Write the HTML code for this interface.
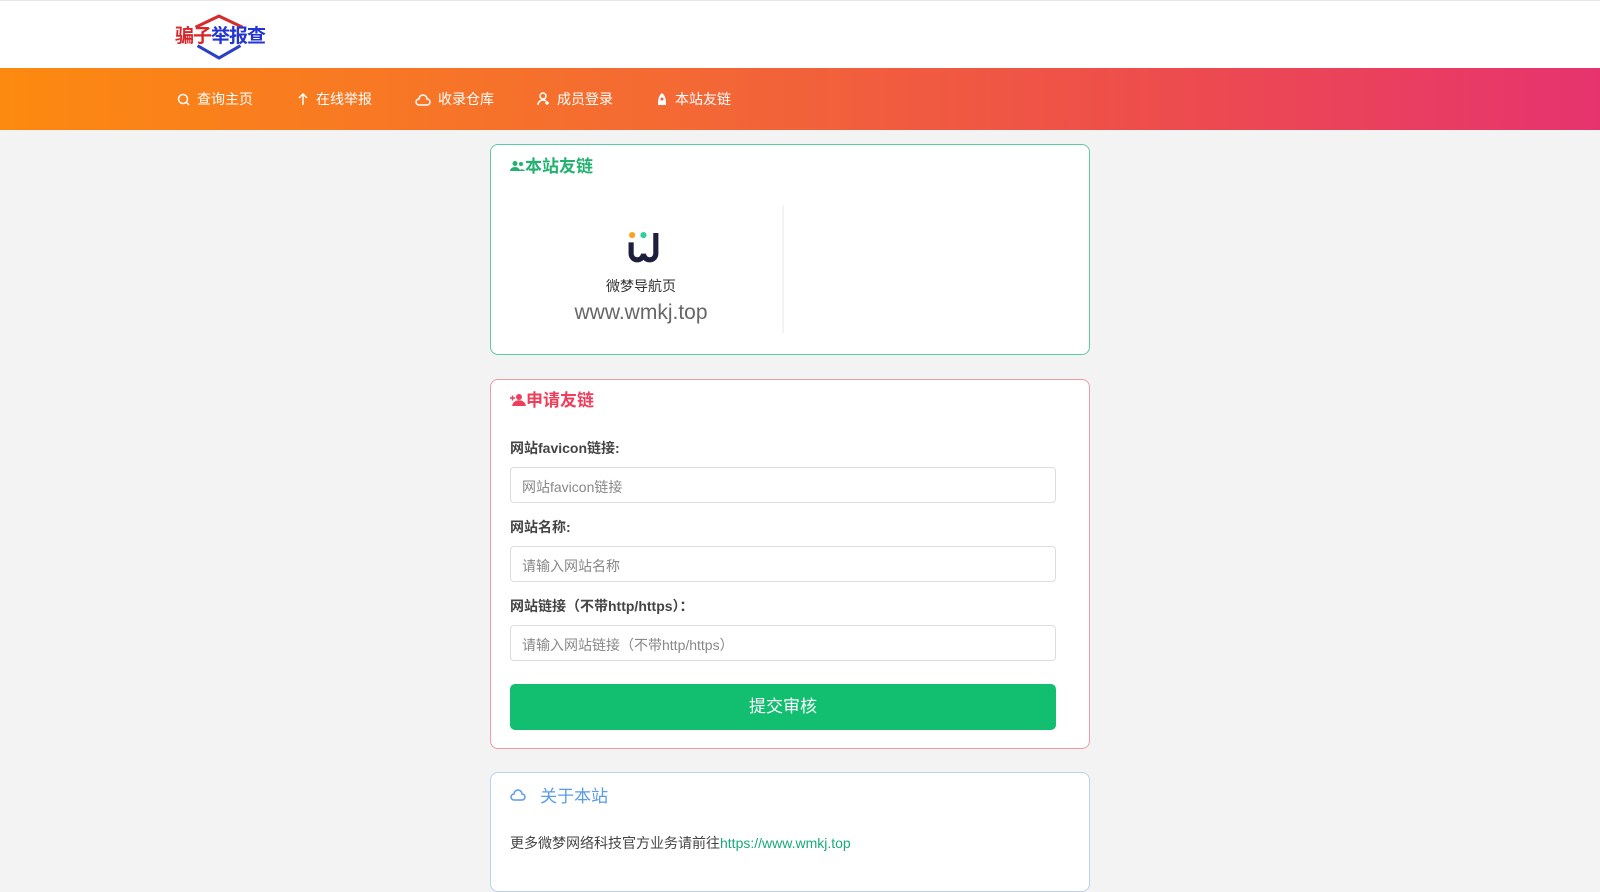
<!DOCTYPE html>
<html><head><meta charset="utf-8"><style>
*{box-sizing:border-box;margin:0;padding:0}
body{width:1600px;height:862px;overflow:hidden;background:#f3f3f3;font-family:"Liberation Sans","Noto Sans CJK SC",sans-serif;position:relative}
.hd{position:absolute;left:0;top:0;width:1600px;height:68px;background:#fff;border-top:1px solid #e8e8e8}
.nav{position:absolute;left:0;top:68px;width:1600px;height:62px;background:linear-gradient(90deg,#fd8a10 0%,#f46b32 40%,#ee4f4a 70%,#e6336f 100%)}
.nav span{position:absolute;top:21px;color:#fff;font-size:14px;line-height:20px}
.nav svg{vertical-align:-2px;margin-right:7px}
.card{position:absolute;left:490px;width:600px;background:#fff;border-radius:8px}
.t{position:absolute;left:19px;font-size:17px;font-weight:bold}
label{position:absolute;left:19px;font-size:14px;font-weight:bold;color:#444}
.in{position:absolute;left:19px;width:546px;height:36px;border:1px solid #ddd;border-radius:4px;font-size:14px;color:#888;padding:9px 11px}
</style></head><body>
<div class="hd">
<svg style="position:absolute;left:187px;top:12px" width="64" height="47" viewBox="0 0 62 46"><path d="M8 14 L31 3 L54 14" fill="none" stroke="#d52b2b" stroke-width="3"/><path d="M10 32 L31 44 L52 32" fill="none" stroke="#2a3fc8" stroke-width="3"/></svg>
<div style="position:absolute;left:175px;top:20px;font-size:19px;font-weight:bold;letter-spacing:-1px"><span style="color:#d8262a">骗子</span><span style="color:#2335d0">举报查</span></div>
</div>
<div class="nav">
<span style="left:177px"><svg width="13" height="13" viewBox="0 0 13 13"><circle cx="6" cy="6" r="4.5" fill="none" stroke="#fff" stroke-width="1.5"/><path d="M9.5 9.5 L12 12" stroke="#fff" stroke-width="1.5"/></svg>查询主页</span>
<span style="left:297px"><svg width="12" height="14" viewBox="0 0 12 14"><path d="M6 13 V2 M2 6 L6 2 L10 6" fill="none" stroke="#fff" stroke-width="1.5"/></svg>在线举报</span>
<span style="left:415px"><svg width="16" height="12" viewBox="0 0 16 12"><path d="M4 11 a3 3 0 0 1 0-6 a4 4 0 0 1 8 0 a3 3 0 0 1 0 6 Z" fill="none" stroke="#fff" stroke-width="1.5"/></svg>收录仓库</span>
<span style="left:537px"><svg width="13" height="14" viewBox="0 0 13 14"><circle cx="6" cy="4" r="3" fill="none" stroke="#fff" stroke-width="1.5"/><path d="M1 13 a5 5 0 0 1 8-4 M10 9 v4 M8 11 h4" fill="none" stroke="#fff" stroke-width="1.5"/></svg>成员登录</span>
<span style="left:656px"><svg width="12" height="14" viewBox="0 0 12 14"><path d="M6 1 C2 4 2 9 2 13 H10 C10 9 10 4 6 1Z" fill="#fff"/><circle cx="6" cy="7" r="1.5" fill="#f0574a"/></svg>本站友链</span>
</div>
<div class="card" style="top:144px;height:211px;border:1px solid #5ccba0">
<div class="t" style="top:7px;color:#21b26f"><svg width="15" height="12" viewBox="0 0 15 12" style="vertical-align:0"><circle cx="5" cy="3.5" r="2.5" fill="#21b26f"/><circle cx="11" cy="4" r="2" fill="#21b26f"/><path d="M0 11 a5 4 0 0 1 10 0Z M9 11 a3.5 3.5 0 0 1 6 0Z" fill="#21b26f"/></svg>本站友链</div>
<svg style="position:absolute;left:136px;top:86px" width="35" height="35" viewBox="0 0 34 34"><circle cx="5" cy="4" r="3" fill="#f5a623"/><circle cx="16" cy="4" r="3" fill="#2bd39a"/><path d="M4 11 V22 a6 6 0 0 0 12 0 a6 6 0 0 0 12 0 V2" fill="none" stroke="#1e1f3c" stroke-width="5"/></svg>
<div style="position:absolute;left:0;width:300px;top:131px;text-align:center;font-size:14px;color:#333">微梦导航页</div>
<div style="position:absolute;left:0;width:300px;top:156px;text-align:center;font-size:21px;color:#666">www.wmkj.top</div>
<div style="position:absolute;left:291px;top:60px;width:2px;height:128px;background:#f3f3f3"></div>
</div>
<div class="card" style="top:379px;height:370px;border:1px solid #f09aa8">
<div class="t" style="top:6px;color:#ee3e5c"><svg width="16" height="13" viewBox="0 0 16 13" style="vertical-align:0"><circle cx="9" cy="4" r="3" fill="#ee3e5c"/><path d="M3 13 a6 5 0 0 1 12 0Z M0 5 h5 M2.5 2.5 v5" fill="#ee3e5c" stroke="#ee3e5c" stroke-width="1.5"/></svg>申请友链</div>
<label style="top:58px">网站favicon链接:</label>
<div class="in" style="top:87px">网站favicon链接</div>
<label style="top:137px">网站名称:</label>
<div class="in" style="top:166px">请输入网站名称</div>
<label style="top:216px">网站链接（不带http/https）：</label>
<div class="in" style="top:245px">请输入网站链接（不带http/https）</div>
<div style="position:absolute;left:19px;top:304px;width:546px;height:46px;background:#12be6f;border-radius:5px;color:#fff;font-size:17px;text-align:center;line-height:46px">提交审核</div>
</div>
<div class="card" style="top:772px;height:120px;border:1px solid #b9d3ef">
<div class="t" style="top:9px;color:#5a9bea;font-weight:normal"><svg width="16" height="14" viewBox="0 0 16 14" style="vertical-align:0"><path d="M4 12 a3 3 0 0 1 0-6 a4 4 0 0 1 8 0 a3 3 0 0 1 0 6 Z" fill="none" stroke="#5a9bea" stroke-width="1.5"/></svg>&nbsp;&nbsp;&nbsp;关于本站</div>
<div style="position:absolute;left:19px;top:60px;font-size:14px;color:#444">更多微梦网络科技官方业务请前往<span style="color:#1aa97a">https://www.wmkj.top</span></div>
</div>
</body></html>
